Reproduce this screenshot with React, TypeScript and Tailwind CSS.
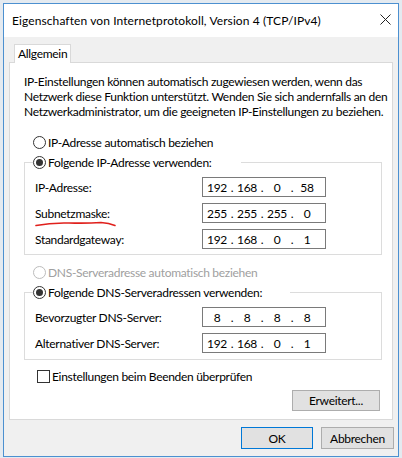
import React from "react";

function Radio({ checked, disabled }: { checked?: boolean; disabled?: boolean }) {
  return (
    <span
      className={`w-[13px] h-[13px] rounded-full border bg-white flex items-center justify-center shrink-0 ${
        disabled ? "border-[#bcbcbc]" : "border-[#333333]"
      }`}
    >
      {checked && <span className="w-[7px] h-[7px] rounded-full bg-[#333333]" />}
    </span>
  );
}

function IpField({ parts }: { parts: string[] }) {
  return (
    <div className="w-[124px] h-[20px] border border-[#7a7a7a] bg-white flex items-center pl-[1px]">
      {parts.map((p, i) => (
        <React.Fragment key={i}>
          {i > 0 && <span className="w-[4px] text-center">.</span>}
          <span className="w-[26px] text-center">{p}</span>
        </React.Fragment>
      ))}
    </div>
  );
}

function Row({ label, parts, mt }: { label: string; parts: string[]; mt: string }) {
  return (
    <div className={`flex items-center ${mt}`}>
      <span className="w-[177px] pl-[10px]">{label}</span>
      <IpField parts={parts} />
    </div>
  );
}

export default function App() {
  return (
    <div className="w-[402px] h-[458px] bg-[#e4eaf0] pt-[3px] pl-[3px] font-['Lato',sans-serif] text-[12px] leading-[15px] text-black tracking-[-0.3px]">
      <div className="w-[396px] h-[454px] border border-[#4c90d0] bg-[#f0f0f0] flex flex-col">
        {/* title bar */}
        <div className="h-[33px] bg-white flex items-center justify-between pl-[8px] pr-[7px]">
          <span className="tracking-[0.1px] -mt-[1px]">Eigenschaften von Internetprotokoll, Version 4 (TCP/IPv4)</span>
          <svg width="11" height="11" viewBox="0 0 11 11" className="mt-[-2px]">
            <path d="M0.5 0.5 L10.5 10.5 M10.5 0.5 L0.5 10.5" stroke="#222" strokeWidth="1" fill="none" />
          </svg>
        </div>

        {/* body */}
        <div className="px-[5px] pt-[7px]">
          <div className="flex">
            <div className="ml-[5px] w-[57px] h-[19px] bg-white border border-b-0 border-[#d9d9d9] relative z-10 -mb-[1px] pl-[3px] pt-[1px]">
              Allgemein
            </div>
          </div>
          <div className="relative h-[358px] bg-white border border-[#d9d9d9] flex flex-col">
            <p className="mt-[11px] pl-[14px] whitespace-nowrap">
              IP-Einstellungen können automatisch zugewiesen werden, wenn das
              <br />
              Netzwerk diese Funktion unterstützt. Wenden Sie sich andernfalls an den
              <br />
              Netzwerkadministrator, um die geeigneten IP-Einstellungen zu beziehen.
            </p>

            <div className="mt-[16px] pl-[23px] flex items-center gap-[2px]">
              <Radio />
              <span>IP-Adresse automatisch beziehen</span>
            </div>

            <div className="mt-[12px] ml-[14px] mr-[10px] border border-[#dcdcdc] pb-[5px]">
              <div className="-mt-[8px] ml-[8px] flex">
                <div className="flex items-center gap-[2px] bg-white pr-[29px]">
                  <Radio checked />
                  <span>Folgende IP-Adresse verwenden:</span>
                </div>
              </div>
              <Row label="IP-Adresse:" parts={["192", "168", "0", "58"]} mt="mt-[7px]" />
              <Row label="Subnetzmaske:" parts={["255", "255", "255", "0"]} mt="mt-[6px]" />
              <Row label="Standardgateway:" parts={["192", "168", "0", "1"]} mt="mt-[6px]" />
            </div>

            <div className="mt-[10px] pl-[23px] flex items-center gap-[2px] text-[#a0a0a0]">
              <Radio disabled />
              <span>DNS-Serveradresse automatisch beziehen</span>
            </div>

            <div className="mt-[12px] ml-[14px] mr-[10px] border border-[#dcdcdc] pb-[6px]">
              <div className="-mt-[8px] ml-[8px] flex">
                <div className="flex items-center gap-[2px] bg-white pr-[28px]">
                  <Radio checked />
                  <span>Folgende DNS-Serveradressen verwenden:</span>
                </div>
              </div>
              <Row label="Bevorzugter DNS-Server:" parts={["8", "8", "8", "8"]} mt="mt-[7px]" />
              <Row label="Alternativer DNS-Server:" parts={["192", "168", "0", "1"]} mt="mt-[6px]" />
            </div>

            <div className="mt-[9px] pl-[27px] flex items-center gap-[2px]">
              <span className="w-[13px] h-[13px] border border-[#333333] bg-white shrink-0" />
              <span>Einstellungen beim Beenden überprüfen</span>
            </div>

            <div className="mt-[6px] flex justify-end pr-[12px]">
              <div className="w-[88px] h-[21px] bg-[#e1e1e1] border border-[#adadad] flex items-center justify-center">
                Erweitert...
              </div>
            </div>

            <svg
              className="absolute left-[25px] top-[157px]"
              width="82"
              height="8"
              viewBox="0 0 82 8"
            >
              <path
                d="M1 5.5 Q 16 2.5 34 3 T 66 2.5 Q 74 3 80 5.5"
                stroke="#e0201c"
                strokeWidth="1.6"
                fill="none"
                strokeLinecap="round"
              />
            </svg>
          </div>
        </div>

        {/* buttons */}
        <div className="mt-[7px] flex justify-end gap-[8px] pr-[4px]">
          <div className="w-[72px] h-[22px] bg-[#e1e1e1] border border-[#0078d7] flex items-center justify-center">
            OK
          </div>
          <div className="w-[73px] h-[22px] bg-[#e1e1e1] border border-[#adadad] flex items-center justify-center">
            Abbrechen
          </div>
        </div>
      </div>
    </div>
  );
}
